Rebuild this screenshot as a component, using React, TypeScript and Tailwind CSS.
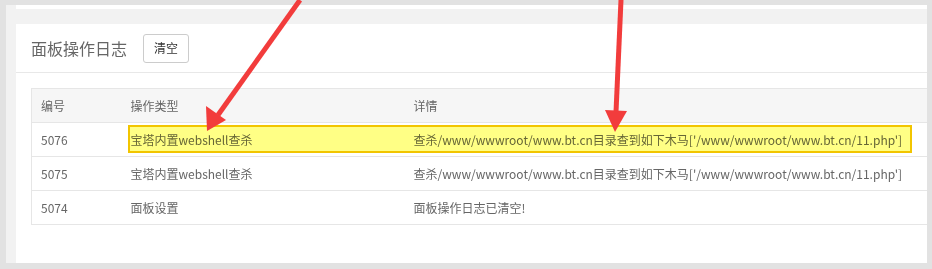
import React from 'react'

const rows = [
  { id: '5076', type: '宝塔内置webshell查杀', detail: "查杀/www/wwwroot/www.bt.cn目录查到如下木马['/www/wwwroot/www.bt.cn/11.php']" },
  { id: '5075', type: '宝塔内置webshell查杀', detail: "查杀/www/wwwroot/www.bt.cn目录查到如下木马['/www/wwwroot/www.bt.cn/11.php']" },
  { id: '5074', type: '面板设置', detail: '面板操作日志已清空!' },
]

function Arrows() {
  return (
    <svg className="absolute inset-0 pointer-events-none" width={932} height={269} viewBox="0 0 932 269">
      {/* left arrow */}
      <line x1={300} y1={0} x2={218} y2={115} stroke="#f23c3c" strokeWidth={5} />
      <polygon points="207,131 206,106 226,120" fill="#f23c3c" />
      {/* right arrow */}
      <line x1={621} y1={0} x2={616} y2={112} stroke="#f23c3c" strokeWidth={5} />
      <polygon points="615,132 605,110 627,111" fill="#f23c3c" />
    </svg>
  )
}

export default function App() {
  return (
    <div
      className="relative w-[932px] h-[269px] bg-[#e2e2e2] pt-[5px] pl-[6px] pr-[5px] pb-[6px] overflow-hidden"
      style={{ fontFamily: '"Noto Sans CJK SC", "Open Sans", sans-serif' }}
    >
      <div className="h-full bg-[#f2f2f2] pl-[10px] flex flex-col">
        {/* bottom edge of the card above */}
        <div className="h-[4px] bg-white shrink-0" />
        <div className="h-[15px] shrink-0" />
        <div className="flex-1 bg-white overflow-hidden">
          <div className="h-[49px] border-b border-[#e8e8e8] flex items-center pl-[15px] gap-4">
            <span className="text-[16px] text-[#666] leading-none">面板操作日志</span>
            <button
              type="button"
              className="w-[46px] h-[29px] border border-[#ccc] rounded-[3px] text-[12px] text-[#333] bg-white"
            >
              清空
            </button>
          </div>
          <div className="relative pl-[15px] pt-[15px]">
            <table className="w-[920px] border-collapse text-[12px] text-[#666] table-fixed">
              <colgroup>
                <col className="w-[90px]" />
                <col className="w-[283px]" />
                <col />
              </colgroup>
              <thead>
                <tr className="h-[34px] bg-[#f6f6f6]">
                  <th className="border border-[#e6e6e6] border-r-0 font-normal text-left pl-[9px]">编号</th>
                  <th className="border-y border-[#e6e6e6] font-normal text-left pl-[9px]">操作类型</th>
                  <th className="border-y border-[#e6e6e6] font-normal text-left pl-[9px]">详情</th>
                </tr>
              </thead>
              <tbody>
                {rows.map((r) => (
                  <tr key={r.id} className="h-[34px]">
                    <td className="border-l border-b border-[#e6e6e6] pl-[9px]">{r.id}</td>
                    <td className="border-b border-[#e6e6e6] pl-[9px]">{r.type}</td>
                    <td className="border-b border-[#e6e6e6] pl-[9px] whitespace-nowrap">{r.detail}</td>
                  </tr>
                ))}
              </tbody>
            </table>
            {/* highlight annotation */}
            <div className="absolute left-[112px] top-[52px] w-[784px] h-[28px] bg-[#ffff66]/80 border-2 border-[#f2c500] mix-blend-multiply" />
          </div>
        </div>
      </div>
      <Arrows />
    </div>
  )
}
